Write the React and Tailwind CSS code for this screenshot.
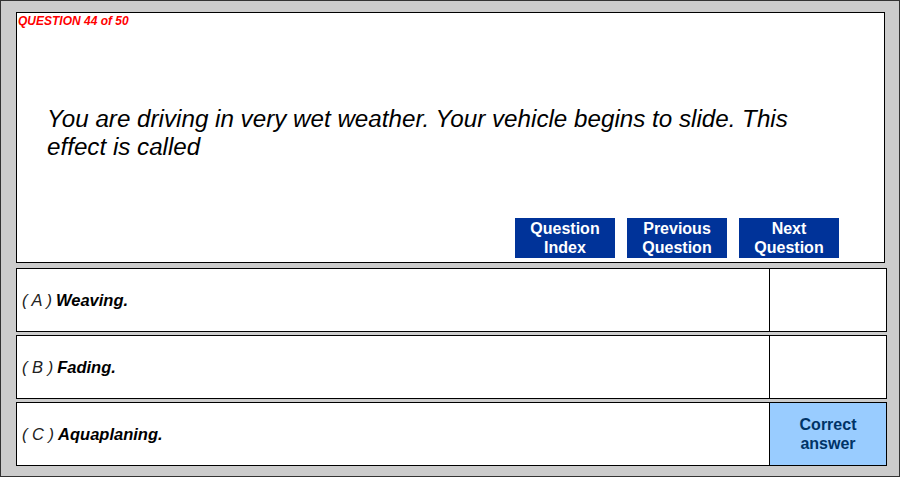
export default function App() {
  const answers = [
    { k: "A", t: "Weaving.", correct: false },
    { k: "B", t: "Fading.", correct: false },
    { k: "C", t: "Aquaplaning.", correct: true },
  ];
  const btns = [["Question", "Index"], ["Previous", "Question"], ["Next", "Question"]];
  return (
    <div className="w-[902px] h-[478px] bg-white" style={{ fontFamily: '"Liberation Sans", Arial, sans-serif' }}>
      <div className="w-[900px] h-[477px] border border-[#333] bg-[#cccccc] pl-[15px] pt-[11px] flex flex-col">
        <div className="w-[869px] h-[251px] border border-black bg-white flex flex-col">
          <div className="pl-[1px] h-[16px] leading-[16px] text-[12px] font-bold italic text-[#ff0000]">QUESTION 44 of 50</div>
          <div className="mt-[76px] pl-[30px] w-[800px] text-[24.2px] leading-[28px] italic text-black">
            You are driving in very wet weather. Your vehicle begins to slide. This effect is called
          </div>
          <div className="mt-auto mb-[4px] flex justify-end gap-[12px] pr-[45px]">
            {btns.map((b, i) => (
              <div key={i} className="w-[100px] h-[40px] bg-[#003399] text-white font-bold text-[16px] leading-[19px] flex flex-col items-center justify-center">
                <span>{b[0]}</span>
                <span>{b[1]}</span>
              </div>
            ))}
          </div>
        </div>
        <div className="mt-[5px] flex flex-col gap-[3px]">
          {answers.map((a) => (
            <div key={a.k} className="w-[871px] h-[64px] border border-black bg-white flex">
              <div className="flex-1 flex items-center pl-[5px]">
                <span className="italic text-[16.5px] text-[#222]">( {a.k} )</span>
                <span className="ml-[4px] italic font-bold text-[16.5px] text-black">{a.t}</span>
              </div>
              <div className={"w-[117px] border-l border-black flex flex-col items-center justify-center " + (a.correct ? "bg-[#99ccff]" : "bg-white")}>
                {a.correct && (
                  <>
                    <span className="font-bold text-[16px] leading-[19px] text-[#003366]">Correct</span>
                    <span className="font-bold text-[16px] leading-[19px] text-[#003366]">answer</span>
                  </>
                )}
              </div>
            </div>
          ))}
        </div>
      </div>
    </div>
  );
}
